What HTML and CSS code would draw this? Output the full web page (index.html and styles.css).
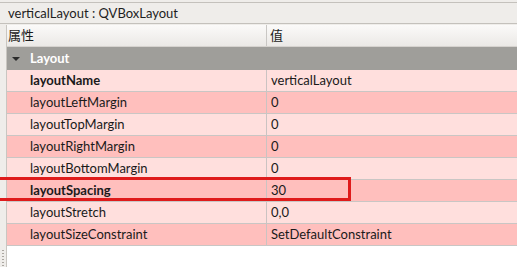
FILE: index.html
```html
<!DOCTYPE html>
<html>
<head>
<meta charset="utf-8">
<link rel="stylesheet" href="styles.css">
</head>
<body>
<div class="titlebar">verticalLayout : QVBoxLayout</div>
<div class="tree">
  <div class="header">
    <div class="cell name">属性</div>
    <div class="cell value">值</div>
  </div>
  <div class="group">
    <span class="arrow"></span>
    <span class="group-label">Layout</span>
  </div>
  <div class="row light bold">
    <div class="cell name">layoutName</div>
    <div class="cell value">verticalLayout</div>
  </div>
  <div class="row dark">
    <div class="cell name">layoutLeftMargin</div>
    <div class="cell value">0</div>
  </div>
  <div class="row light">
    <div class="cell name">layoutTopMargin</div>
    <div class="cell value">0</div>
  </div>
  <div class="row dark">
    <div class="cell name">layoutRightMargin</div>
    <div class="cell value">0</div>
  </div>
  <div class="row light">
    <div class="cell name">layoutBottomMargin</div>
    <div class="cell value">0</div>
  </div>
  <div class="row dark bold">
    <div class="cell name">layoutSpacing</div>
    <div class="cell value">30</div>
    <div class="callout"></div>
  </div>
  <div class="row light">
    <div class="cell name">layoutStretch</div>
    <div class="cell value">0,0</div>
  </div>
  <div class="row dark">
    <div class="cell name">layoutSizeConstraint</div>
    <div class="cell value">SetDefaultConstraint</div>
  </div>
  <div class="handle"></div>
</div>
</body>
</html>
```

FILE: styles.css
```css
html, body {
  margin: 0;
  padding: 0;
  height: 100%;
  overflow: hidden;
}
body {
  background: #efedea;
  font-family: "Lato", "Noto Sans CJK SC", sans-serif;
  font-size: 13px;
  color: #1a1a1a;
}
.titlebar {
  margin-top: 2px;
  height: 22px;
  box-sizing: border-box;
  border-top: 1px solid #c4c1bc;
  border-bottom: 1px solid #c4c1bc;
  background: #efedea;
  padding-left: 8px;
  line-height: 20px;
  color: #1e1e1e;
}
.tree {
  margin-top: 1px;
  margin-left: 6px;
  border-left: 1px solid #c9c6c1;
  background: #fff;
  height: 242px;
  position: relative;
}
.header {
  display: flex;
  height: 22px;
  box-sizing: border-box;
  background: linear-gradient(#fbfaf9, #ebe9e6);
  border-bottom: 1px solid #d6d3cf;
}
.header .cell {
  line-height: 21px;
}
.cell.name {
  width: 260px;
  flex: none;
  box-sizing: border-box;
  border-right: 1px solid #c9c7c4;
  padding-left: 23px;
}
.header .cell.name {
  padding-left: 1px;
}
.cell.value {
  padding-left: 4px;
}
.header .cell.value {
  padding-left: 3px;
}
.group {
  height: 23px;
  background: #9f9e9a;
  display: flex;
  align-items: center;
  color: #fff;
  font-weight: bold;
}
.arrow {
  width: 0;
  height: 0;
  border-left: 4px solid transparent;
  border-right: 4px solid transparent;
  border-top: 4px solid #2b2b2b;
  margin-left: 5px;
  margin-right: 10px;
}
.group-label {
  line-height: 23px;
}
.row {
  display: flex;
  height: 22px;
  box-sizing: border-box;
  border-bottom: 1px solid #c9c6c4;
  line-height: 21px;
  position: relative;
}
.row.light { background: #ffdfdd; }
.row.dark { background: #ffbfbd; }
.row.bold .name { font-weight: bold; }
.row .cell.name {
  border-right: 1px solid #cbc3c2;
}
.callout {
  position: absolute;
  left: -20px;
  top: -3px;
  width: 364px;
  height: 24px;
  box-sizing: border-box;
  border: 3px solid #df1b1b;
}
.handle {
  position: absolute;
  left: -5px;
  top: 224px;
  width: 2px;
  height: 18px;
  background: radial-gradient(circle, #aaa6a0 0.6px, transparent 1px) 0 0 / 2px 3px;
}
```
